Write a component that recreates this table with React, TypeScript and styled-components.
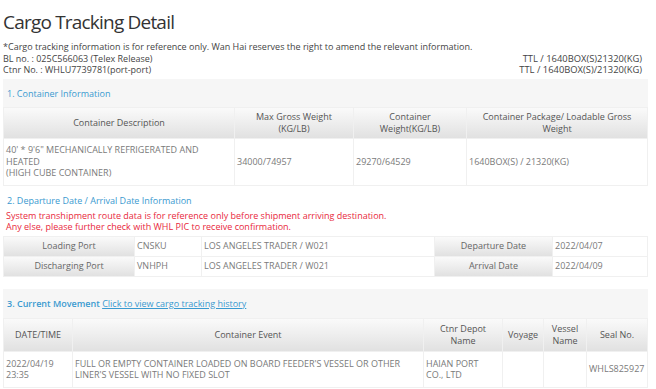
import React from "react";
import styled, { createGlobalStyle } from "styled-components";

const Global = createGlobalStyle`
  html, body { margin: 0; padding: 0; background: #fff; }
  body { font-family: "Open Sans", "Noto Sans", sans-serif; color: #555; }
`;

const Page = styled.div`
  width: 645px;
  margin-left: 3px;
  padding-top: 8px;
`;

const Title = styled.h1`
  margin: 0 0 5px 0;
  font-size: 19px;
  font-weight: 400;
  color: #333;
  line-height: 28px;
  letter-spacing: -0.8px;
`;

const InfoBlock = styled.div`
  font-size: 9px;
  line-height: 11.5px;
  color: #444;
  padding-bottom: 3px;
`;

const InfoRow = styled.div`
  display: flex;
  justify-content: space-between;
`;

const RightNote = styled.span`
  padding-right: 6px;
  font-size: 9.4px;
`;

const Panel = styled.section<{ $tint?: boolean }>`
  background: ${(p) => (p.$tint ? "#f6f6f6" : "#fff")};
`;

const SectionHead = styled.div<{ $pb?: number }>`
  padding: 8px 4px ${(p) => p.$pb ?? 7}px;
  font-size: 9px;
  line-height: 13px;
  color: #3a9ad0;
`;

const Strong = styled.span`
  font-weight: 600;
`;

const HistoryLink = styled.a`
  color: #3a9ad0;
  text-decoration: underline;
  cursor: pointer;
`;

const Warn = styled.div`
  padding: 0 3px 3px;
  font-size: 9px;
  line-height: 11.5px;
  color: #e8283c;
`;

const Table = styled.table`
  width: 100%;
  border-collapse: separate;
  border-spacing: 1px;
  background: #f0f0f0;
  font-size: 9px;
  line-height: 11.5px;
  table-layout: fixed;
`;

const HeadCell = styled.th<{ $h?: number }>`
  background: linear-gradient(#fafafa, #e1e1e1);
  font-weight: 400;
  color: #555;
  text-align: center;
  padding: 2px 4px;
  height: ${(p) => p.$h ?? 26}px;
`;

const Cell = styled.td<{ $h?: number }>`
  background: #fff;
  color: #7a7a7a;
  padding: 3px 2px;
  text-align: left;
  vertical-align: middle;
  height: ${(p) => (p.$h ? `${p.$h}px` : "auto")};
`;

const LabelCell = styled.td`
  background: linear-gradient(#fafafa, #e1e1e1);
  color: #666;
  text-align: center;
  padding: 3px 4px;
  height: 13px;
`;

const MovementPanel = styled(Panel)`
  margin-top: 12px;
`;

export default function App() {
  return (
    <>
      <Global />
      <Page>
        <Title>Cargo Tracking Detail</Title>
        <InfoBlock>
          <div>
            *Cargo tracking information is for reference only. Wan Hai reserves the right to amend the relevant information.
          </div>
          <InfoRow>
            <span>BL no. : 025C566063 (Telex Release)</span>
            <RightNote>TTL / 1640BOX(S)21320(KG)</RightNote>
          </InfoRow>
          <InfoRow>
            <span>Ctnr No. : WHLU7739781(port-port)</span>
            <RightNote>TTL / 1640BOX(S)/21320(KG)</RightNote>
          </InfoRow>
        </InfoBlock>

        <Panel $tint>
          <SectionHead>1. Container Information</SectionHead>
          <Table>
            <colgroup>
              <col style={{ width: 230 }} />
              <col style={{ width: 118 }} />
              <col style={{ width: 112 }} />
              <col />
            </colgroup>
            <thead>
              <tr>
                <HeadCell>Container Description</HeadCell>
                <HeadCell>
                  Max Gross Weight
                  <br />
                  (KG/LB)
                </HeadCell>
                <HeadCell>
                  Container
                  <br />
                  Weight(KG/LB)
                </HeadCell>
                <HeadCell>
                  Container Package/ Loadable Gross
                  <br />
                  Weight
                </HeadCell>
              </tr>
            </thead>
            <tbody>
              <tr>
                <Cell $h={40}>
                  40' * 9'6" MECHANICALLY REFRIGERATED AND
                  <br />
                  HEATED
                  <br />
                  (HIGH CUBE CONTAINER)
                </Cell>
                <Cell>34000/74957</Cell>
                <Cell>29270/64529</Cell>
                <Cell>1640BOX(S) / 21320(KG)</Cell>
              </tr>
            </tbody>
          </Table>
        </Panel>

        <Panel>
          <SectionHead $pb={3}>2. Departure Date / Arrival Date Information</SectionHead>
          <Warn>
            System transhipment route data is for reference only before shipment arriving destination.
            <br />
            Any else, please further check with WHL PIC to receive confirmation.
          </Warn>
          <Table>
            <colgroup>
              <col style={{ width: 130 }} />
              <col style={{ width: 66 }} />
              <col style={{ width: 232 }} />
              <col style={{ width: 117 }} />
              <col />
            </colgroup>
            <tbody>
              <tr>
                <LabelCell>Loading Port</LabelCell>
                <Cell>CNSKU</Cell>
                <Cell>LOS ANGELES TRADER / W021</Cell>
                <LabelCell>Departure Date</LabelCell>
                <Cell>2022/04/07</Cell>
              </tr>
              <tr>
                <LabelCell>Discharging Port</LabelCell>
                <Cell>VNHPH</Cell>
                <Cell>LOS ANGELES TRADER / W021</Cell>
                <LabelCell>Arrival Date</LabelCell>
                <Cell>2022/04/09</Cell>
              </tr>
            </tbody>
          </Table>
        </Panel>

        <MovementPanel $tint>
          <SectionHead $pb={8}>
            <Strong>3. Current Movement</Strong> <HistoryLink>Click to view cargo tracking history</HistoryLink>
          </SectionHead>
          <Table>
            <colgroup>
              <col style={{ width: 68 }} />
              <col style={{ width: 350 }} />
              <col style={{ width: 78 }} />
              <col style={{ width: 40 }} />
              <col style={{ width: 42 }} />
              <col />
            </colgroup>
            <thead>
              <tr>
                <HeadCell $h={28}>DATE/TIME</HeadCell>
                <HeadCell>Container Event</HeadCell>
                <HeadCell>
                  Ctnr Depot
                  <br />
                  Name
                </HeadCell>
                <HeadCell>Voyage</HeadCell>
                <HeadCell>
                  Vessel
                  <br />
                  Name
                </HeadCell>
                <HeadCell>Seal No.</HeadCell>
              </tr>
            </thead>
            <tbody>
              <tr>
                <Cell $h={29}>
                  2022/04/19
                  <br />
                  23:35
                </Cell>
                <Cell>
                  FULL OR EMPTY CONTAINER LOADED ON BOARD FEEDER'S VESSEL OR OTHER
                  <br />
                  LINER'S VESSEL WITH NO FIXED SLOT
                </Cell>
                <Cell>
                  HAIAN PORT
                  <br />
                  CO., LTD
                </Cell>
                <Cell />
                <Cell />
                <Cell>WHLS825927</Cell>
              </tr>
            </tbody>
          </Table>
        </MovementPanel>
      </Page>
    </>
  );
}
